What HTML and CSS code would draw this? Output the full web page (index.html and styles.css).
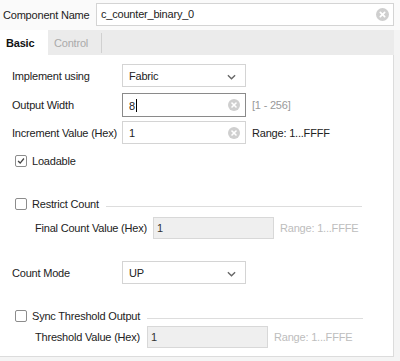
FILE: index.html
```html
<!DOCTYPE html>
<html lang="en">
  <head>
    <meta charset="UTF-8" />
    <meta name="viewport" content="width=device-width, initial-scale=1.0" />
    <title>Counter Binary</title>
    <link rel="stylesheet" href="styles.css">
  </head>
  <body>
    <div class="header">
      <span class="header-label">Component Name</span>
      <div class="field name-field">
        <span class="value">c_counter_binary_0</span>
        <span class="clear big"><svg viewBox="0 0 12 12"><line x1="4" y1="4" x2="8" y2="8" /><line x1="8" y1="4" x2="4" y2="8" /></svg></span>
      </div>
    </div>

    <div class="tabs">
      <div class="tab active">Basic</div>
      <div class="tab">Control</div>
      <div class="tab-sep"></div>
    </div>

    <div class="panel">
      <div class="row row-1">
        <span class="label">Implement using</span>
        <div class="field select">
          <span class="value">Fabric</span>
          <svg class="chevron" viewBox="0 0 10 6"><polyline points="1,1 5,5 9,1" /></svg>
        </div>
      </div>

      <div class="row row-2">
        <span class="label">Output Width</span>
        <div class="field focus">
          <span class="value">8<span class="caret"></span></span>
          <span class="clear"><svg viewBox="0 0 12 12"><line x1="4" y1="4" x2="8" y2="8" /><line x1="8" y1="4" x2="4" y2="8" /></svg></span>
        </div>
        <span class="hint">[1 - 256]</span>
      </div>

      <div class="row row-3">
        <span class="label">Increment Value (Hex)</span>
        <div class="field">
          <span class="value">1</span>
          <span class="clear"><svg viewBox="0 0 12 12"><line x1="4" y1="4" x2="8" y2="8" /><line x1="8" y1="4" x2="4" y2="8" /></svg></span>
        </div>
        <span class="hint dark">Range: 1...FFFF</span>
      </div>

      <div class="check-row loadable">
        <span class="box checked"><svg viewBox="0 0 12 12"><polyline points="2.5,6 5,8.5 9.5,3" /></svg></span>
        <span>Loadable</span>
      </div>

      <div class="check-row group restrict">
        <span class="box"></span>
        <span>Restrict Count</span>
        <span class="rule"></span>
      </div>

      <div class="row sub final">
        <span class="label">Final Count Value (Hex)</span>
        <div class="field disabled">
          <span class="value">1</span>
        </div>
        <span class="hint light">Range: 1...FFFE</span>
      </div>

      <div class="row count-mode">
        <span class="label">Count Mode</span>
        <div class="field select">
          <span class="value">UP</span>
          <svg class="chevron" viewBox="0 0 10 6"><polyline points="1,1 5,5 9,1" /></svg>
        </div>
      </div>

      <div class="check-row group sync">
        <span class="box"></span>
        <span>Sync Threshold Output</span>
        <span class="rule"></span>
      </div>

      <div class="row sub threshold">
        <span class="label">Threshold Value (Hex)</span>
        <div class="field disabled">
          <span class="value">1</span>
        </div>
        <span class="hint light">Range: 1...FFFE</span>
      </div>
    </div>
  </body>
</html>
```

FILE: styles.css
```css
body {
  margin: 0;
  font-family: "Liberation Sans", Arial, sans-serif;
  font-size: 11px;
  letter-spacing: -0.2px;
  color: #222;
  background-color: #f4f4f4;
  width: 400px;
  height: 361px;
  overflow: hidden;
  white-space: nowrap;
}

.header {
  display: flex;
  align-items: center;
  height: 30px;
  background-color: #fafafa;
}

.header-label {
  flex-shrink: 0;
  width: 96px;
  padding-left: 3px;
  box-sizing: border-box;
}

.field {
  position: relative;
  flex-shrink: 0;
  display: flex;
  align-items: center;
  box-sizing: border-box;
  width: 124px;
  height: 100%;
  background-color: #fff;
  border: 1px solid #d4d4d4;
  padding-left: 6px;
}

.name-field {
  width: 298px;
  height: 23px;
  margin-top: -2px;
  padding-left: 4px;
}

.caret {
  display: inline-block;
  width: 1px;
  height: 13px;
  background-color: #000;
  vertical-align: -2px;
  margin-left: 1px;
}

.clear {
  position: absolute;
  right: 5px;
  top: 50%;
  width: 12px;
  height: 12px;
  margin-top: -6px;
  border-radius: 50%;
  background-color: #cfcfcf;
}

.clear.big {
  right: 4px;
  width: 13px;
  height: 13px;
  margin-top: -6px;
}

.clear svg {
  display: block;
  width: 100%;
  height: 100%;
}

.clear line {
  stroke: #fff;
  stroke-width: 1.6;
  stroke-linecap: round;
}

.tabs {
  display: flex;
  align-items: center;
  width: 394px;
  height: 25px;
  background-color: #ebebeb;
}

.tab {
  height: 100%;
  display: flex;
  align-items: center;
  padding: 0 7px 0 6px;
  color: #aaa;
}

.tab.active {
  width: 48px;
  box-sizing: border-box;
  background-color: #fff;
  color: #111;
  font-weight: bold;
}

.tab-sep {
  width: 1px;
  height: 20px;
  margin-left: 6px;
  background-color: #d0d0d0;
}

.panel {
  width: 394px;
  box-sizing: border-box;
  background-color: #fff;
  border-right: 1px solid #dcdcdc;
  border-bottom: 1px solid #dcdcdc;
  padding: 9px 0 8px 12px;
}

.row {
  display: flex;
  align-items: center;
}

.label {
  flex-shrink: 0;
  width: 110px;
}

.row-1 { height: 23px; }
.row-2 { height: 24px; margin-top: 6px; }
.row-3 { height: 23px; margin-top: 4px; }

.focus {
  border-color: #8a8a8a;
}

.hint {
  margin-left: 6px;
  color: #999;
}

.hint.dark { color: #222; }
.hint.light { color: #bdbdbd; }

.chevron {
  position: absolute;
  right: 9px;
  top: 50%;
  width: 9px;
  height: 6px;
  margin-top: -2px;
  fill: none;
  stroke: #666;
  stroke-width: 1.5;
}

.check-row {
  display: flex;
  align-items: center;
  height: 14px;
  padding-left: 3px;
}

.box {
  display: inline-block;
  flex-shrink: 0;
  box-sizing: border-box;
  width: 12px;
  height: 12px;
  border: 1px solid #8c8c8c;
  border-radius: 2px;
  margin-right: 5px;
  background-color: #fff;
}

.box svg {
  display: block;
  width: 10px;
  height: 10px;
  fill: none;
  stroke: #444;
  stroke-width: 1.6;
}

.loadable { margin-top: 10px; }
.restrict { margin-top: 29px; }
.sync { margin-top: 25px; }

.rule {
  height: 1px;
  background-color: #dddddd;
  margin-left: 7px;
  margin-top: 4px;
  width: 256px;
}

.sync .rule {
  width: 216px;
}

.sub {
  padding-left: 23px;
  height: 22px;
}

.sub .label {
  width: 118px;
}

.threshold .label {
  width: 112px;
}

.final { margin-top: 6px; }
.threshold { margin-top: 3px; }

.disabled {
  width: 121px;
  background-color: #efefef;
  border-color: #d8d8d8;
  color: #333;
  padding-left: 3px;
}

.count-mode {
  height: 23px;
  margin-top: 22px;
}
```
